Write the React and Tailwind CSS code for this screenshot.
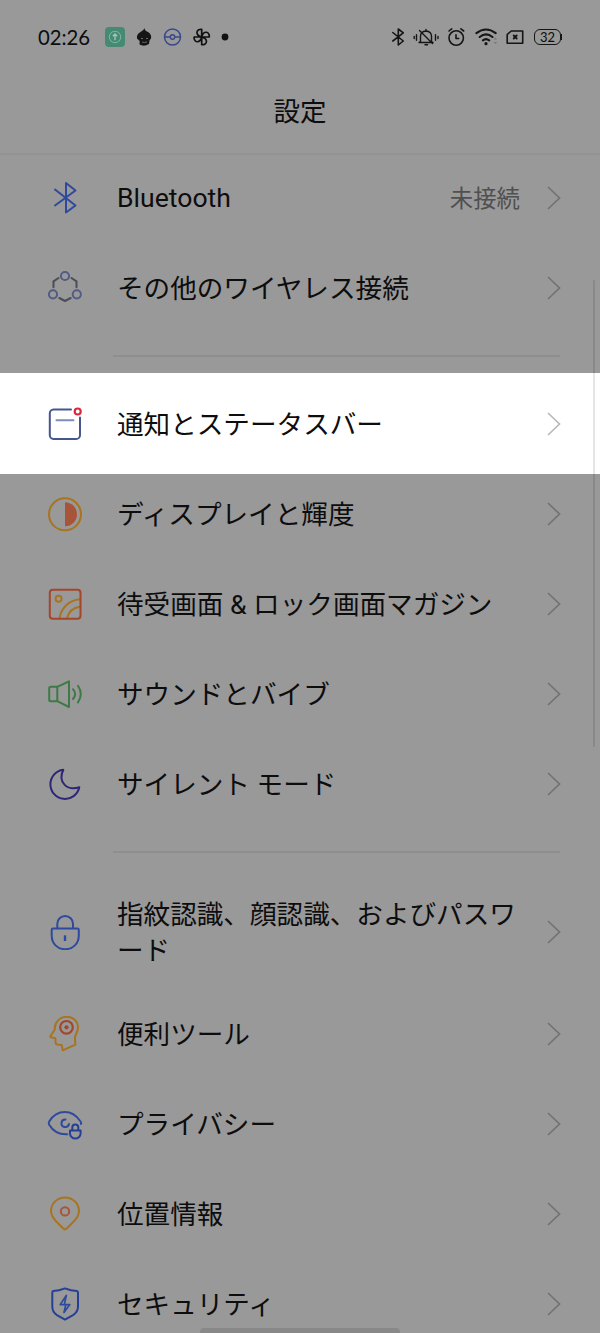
import React from 'react';

const BluetoothIcon = () => (
  <path d="M8 9.5 L28.5 25.5 L19 32.5 V3 L28.5 10.5 L8 25.5" stroke="#2f4a9c" />
);

const WirelessIcon = () => (
  <>
    <path d="M11.5 8 L6.5 11.3 V17.3 M24.5 8 L29.5 11.3 V17.3 M12.3 28 L18 31 L23.7 28" stroke="#4b4d57" />
    <circle cx="18" cy="6" r="4.1" stroke="#525c85" />
    <circle cx="6" cy="24.3" r="4.1" stroke="#525c85" />
    <circle cx="29.8" cy="24.3" r="4.1" stroke="#525c85" />
  </>
);

const NotificationIcon = () => (
  <>
    <path d="M24 3.6 H6.5 A3.8 3.8 0 0 0 2.8 7.4 V29.2 A3.8 3.8 0 0 0 6.5 33 H29.2 A3.8 3.8 0 0 0 33 29.2 V11.5" stroke="#46568f" />
    <path d="M9.5 14.2 H26.5" stroke="#7f8db8" />
    <circle cx="30.7" cy="5.5" r="3" stroke="#e0263c" strokeWidth="2.2" />
  </>
);

const DisplayIcon = () => (
  <>
    <circle cx="18" cy="18.3" r="16" stroke="#a8741f" />
    <path d="M18 6.3 A12 12 0 0 1 18 30.3 Z" fill="#a85439" stroke="none" />
  </>
);

const WallpaperIcon = () => (
  <>
    <path d="M12.5 32.5 C14 22 22 14 33 13.2 M19.8 32.5 C21.5 26 26.5 21.5 33 20.7" stroke="#a8741f" />
    <circle cx="11.6" cy="12.8" r="3" stroke="#a8741f" />
    <rect x="2.8" y="3.7" width="30.7" height="29" rx="3" stroke="#a3462a" />
  </>
);

const SoundIcon = () => (
  <path
    d="M10.3 10.8 H3.7 Q2.2 10.8 2.2 12.3 V23.7 Q2.2 25.2 3.7 25.2 H10.3 Z L22 5.3 V31 L10.3 25.2 M26 13.2 Q30.3 18 26 23 M31 9.8 Q36.6 18 31 26.4"
    stroke="#3d7a46"
  />
);

const MoonIcon = () => (
  <path d="M16.3 3.8 A14.6 14.6 0 1 0 32.3 21.3 C21 25 10 17 16.3 3.8 Z" stroke="#2e2577" />
);

const LockIcon = () => (
  <>
    <path d="M10.3 14.3 V9.8 A7.8 7.8 0 0 1 26 9.8 V14.3" stroke="#2f4a9c" />
    <path d="M6 14.4 H30.4 Q31.8 14.4 31.8 15.8 V21.5 C31.8 29.5 26 35.2 18.2 35.2 S4.7 29.5 4.7 21.5 V15.8 Q4.7 14.4 6 14.4 Z" stroke="#2f4a9c" />
    <path d="M18 21.3 V27" stroke="#2f4a9c" strokeWidth="2.4" strokeLinecap="butt" />
  </>
);

const HeadIcon = () => (
  <>
    <path d="M15.7 34.3 L14.7 28.9 L10.2 28.6 Q8.7 28.4 8.6 26.8 L8.4 22.3 L3.9 21.3 Q3 21 3.4 20.2 L7.8 13.5 C7.3 6 13 .8 19.7 .8 C26.5 .8 31 5.5 31 11.5 C31 16.5 27.7 18.5 27.9 22.5 L28.4 28.6 Z" stroke="#a8741f" />
    <circle cx="19.5" cy="11.3" r="6.3" stroke="#a3462a" strokeWidth="2.2" />
    <circle cx="19.5" cy="11.3" r="2.1" fill="#a3462a" stroke="none" />
  </>
);

const PrivacyIcon = () => (
  <>
    <path d="M34 18 C34.4 17 34 16 33.2 15 C29 9 24 6 18 6 C11 6 5.5 10 2.2 15.5 Q1.3 17 2.2 18.7 C6 25 12 28.8 20.3 28.3" stroke="#2f4a9c" />
    <path d="M18.5 13.4 A3.8 3.8 0 1 0 22 18" stroke="#2f4a9c" />
    <path d="M25.3 24.3 V21.5 A3 3 0 0 1 31.3 21.5 V24.3 M23 24.4 H33.6 V27.2 A5.3 5.3 0 0 1 23 27.2 Z" stroke="#263f96" />
  </>
);

const LocationIcon = () => (
  <>
    <path d="M18 33.5 Q17 33.5 12 28.3 C7 23.7 4 20 4 15 A14 13.6 0 0 1 32 15 C32 20 29 23.7 24 28.3 Q19 33.5 18 33.5 Z" stroke="#a8741f" />
    <circle cx="18" cy="15.4" r="4.2" stroke="#a85439" />
  </>
);

const SecurityIcon = () => (
  <>
    <path d="M18 2.4 Q24 4.8 29.8 5 Q31 5.2 31 6.5 V20.5 Q31 25.5 26.5 28.8 L18 33.6 L9.5 28.8 Q5.3 25.5 5.3 20.5 V6.5 Q5.3 5.2 6.3 5 Q12 4.8 18 2.4 Z" stroke="#263f96" />
    <path d="M19.3 9.5 L13.2 18.6 H22.8 L17 26.4 M19.3 9.5 L17.3 18.6 M17 26.4 L18.8 18.6" stroke="#2f4a9c" strokeWidth="1.7" />
  </>
);

const Chevron = ({ light }) => (
  <svg width="14" height="24" viewBox="0 0 14 24" fill="none" className={light ? 'text-[#b9b9b9]' : 'text-[#727272]'}>
    <path d="M1.5 1.5 L12.5 12 L1.5 22.5" stroke="currentColor" strokeWidth="1.7" strokeLinecap="round" />
  </svg>
);

const Row = ({ icon: Icon, label, value, active, tall, latin }) => {
  let size = 'h-[90px]';
  if (tall) size = 'h-[114px]';
  if (active) size = 'h-[101px] -mt-[6px] -mb-[5px] pt-px bg-white';

  return (
    <li className={`flex shrink-0 items-center pl-[47px] pr-[39px] ${size}`}>
      <svg width="36" height="36" viewBox="0 0 36 36" fill="none" strokeWidth="2" strokeLinecap="round" strokeLinejoin="round" className="shrink-0">
        <Icon />
      </svg>
      <span className={`ml-[34px] flex-1 text-[26.6px] leading-[36px] whitespace-pre-line ${latin ? '' : 'pt-0.5'}`}>{label}</span>
      {value && <span className="mr-[27px] pt-[3px] text-[23.4px] text-[#505050]">{value}</span>}
      <Chevron light={active} />
    </li>
  );
};

const Divider = () => (
  <li className="my-[22px] ml-[113px] mr-10 h-0.5 shrink-0 bg-[#8f8f8f]" />
);

const StatusBar = () => (
  <div className="flex h-[74px] shrink-0 items-center justify-between px-[38px]">
    <div className="flex items-center">
      <span className="w-[67px] font-['Lato','Noto_Sans_CJK_JP',sans-serif] text-[20.3px] leading-none">02:26</span>
      <svg width="130" height="24" viewBox="0 0 130 24" fill="none">
        <rect x="0" y="2" width="20" height="20" rx="4" fill="#458a72" />
        <circle cx="10" cy="12" r="5.7" stroke="#82b5a2" strokeWidth="1" />
        <path d="M10 15.2 V9.5 M7.8 11.2 L10 9 L12.2 11.2" stroke="#a3c6ba" strokeWidth="1.4" />
        <path d="M39.5 3 Q39.4 5.6 43 7 Q47 9.5 46 13.5 L44.5 15.5 L44 19 Q39 22 34.5 19.5 L34.7 16 L32 13.5 Q31.3 9.3 35.5 7 Q38.8 5.6 39.5 3 Z" fill="#151515" />
        <path d="M36 13.5 H38 M41 13.5 H43 M37 17 Q39 18 42 17" stroke="#666" strokeWidth="1" />
        <circle cx="67.5" cy="12" r="8" stroke="#38488b" strokeWidth="1.5" />
        <path d="M60 12 H65 M70 12 H75" stroke="#38488b" strokeWidth="1.5" />
        <circle cx="67.5" cy="12" r="2.2" stroke="#38488b" strokeWidth="1.4" />
        <path d="M96.7 12 V4.3 C91 3.8 89.8 10 96.7 12 M96.7 12 H104.3 C104.8 6.3 98.5 5.1 96.7 12 M96.7 12 V19.7 C102.4 20.2 103.6 14 96.7 12 M96.7 12 H89.1 C88.6 17.7 94.9 18.9 96.7 12" stroke="#111" strokeWidth="1.7" strokeLinejoin="round" />
        <circle cx="120" cy="12" r="3.4" fill="#111" />
      </svg>
    </div>
    <div className="flex items-center">
      <svg width="142" height="24" viewBox="0 0 142 24" fill="none" stroke="#151515" strokeWidth="1.6" strokeLinecap="round" strokeLinejoin="round">
        <path d="M1.8 7.5 L12.3 16 L7.3 20 V4 L12.3 7.8 L1.8 16" />
        <path d="M29.5 16.5 V11 Q29.7 6.5 35 6 Q40.3 6.5 40.5 11 V16.5 L42 17.5 H28 L29.5 16.5 M34 19.8 H36.5 M35 4.5 V6 M28.5 5.5 L41.5 18.5" strokeWidth="1.4" />
        <path d="M23.2 11.4 V13.6 M25.5 9.7 V15.3 M44.5 9.7 V15.3 M47 11.4 V13.6" strokeWidth="1.4" />
        <circle cx="65.2" cy="13" r="7.2" />
        <path d="M65 9.7 V13.5 H67.7 M58 6 L60.7 3.8 M69.9 3.8 L72.7 6" />
        <path d="M85.4 8.2 Q95 .8 104.7 8.2 M88.7 12 Q95 6.8 101.5 12 M91.9 15.4 Q95 12.8 98.2 15.4" strokeWidth="2.1" />
        <circle cx="95" cy="18.7" r="1.6" fill="#151515" stroke="none" />
        <path d="M102.5 14.5 L104.4 12.5 L106.3 14.5 Z M102.5 17 L104.4 19 L106.3 17 Z" fill="#787878" stroke="none" />
        <path d="M120.3 6 H131.7 V18.2 H116.2 V9.5 Z" />
        <path d="M122.7 10.5 L125.7 13.5 M125.7 10.5 L122.7 13.5" strokeWidth="1.8" />
      </svg>
      <div className="ml-[1.5px] flex items-center">
        <span className="flex h-4 w-[27px] items-center justify-center rounded-[6px] border-[1.5px] border-[#151515] font-['Lato',sans-serif] text-[13px] leading-none">32</span>
        <span className="h-1.5 w-px bg-[#151515]" />
      </div>
    </div>
  </div>
);

const App = () => {
  return (
    <div className="relative flex h-[1333px] w-[600px] flex-col overflow-hidden bg-[#999999] font-['Roboto','Noto_Sans_CJK_JP',sans-serif] text-[#0d0d0d]" lang="ja">
      <StatusBar />
      <h1 className="flex h-[81px] shrink-0 items-center justify-center border-b-2 border-[#939393] pb-[3px] text-[26.5px]">設定</h1>
      <ul className="-mt-0.5 flex flex-col">
        <Row icon={BluetoothIcon} label="Bluetooth" value="未接続" latin />
        <Row icon={WirelessIcon} label="その他のワイヤレス接続" />
        <Divider />
        <Row icon={NotificationIcon} label="通知とステータスバー" active />
        <Row icon={DisplayIcon} label="ディスプレイと輝度" />
        <Row icon={WallpaperIcon} label="待受画面 & ロック画面マガジン" />
        <Row icon={SoundIcon} label="サウンドとバイブ" />
        <Row icon={MoonIcon} label="サイレント モード" />
        <Divider />
        <Row icon={LockIcon} label={'指紋認識、顔認識、およびパスワ\nード'} tall />
        <Row icon={HeadIcon} label="便利ツール" />
        <Row icon={PrivacyIcon} label="プライバシー" />
        <Row icon={LocationIcon} label="位置情報" />
        <Row icon={SecurityIcon} label="セキュリティ" />
      </ul>
      <div className="absolute right-[5px] top-[280px] h-[467px] w-0.5 rounded-full bg-black/10" />
      <div className="absolute bottom-0 left-[200px] h-[5px] w-[200px] rounded-t bg-[#888888]" />
    </div>
  );
};

export default App;
